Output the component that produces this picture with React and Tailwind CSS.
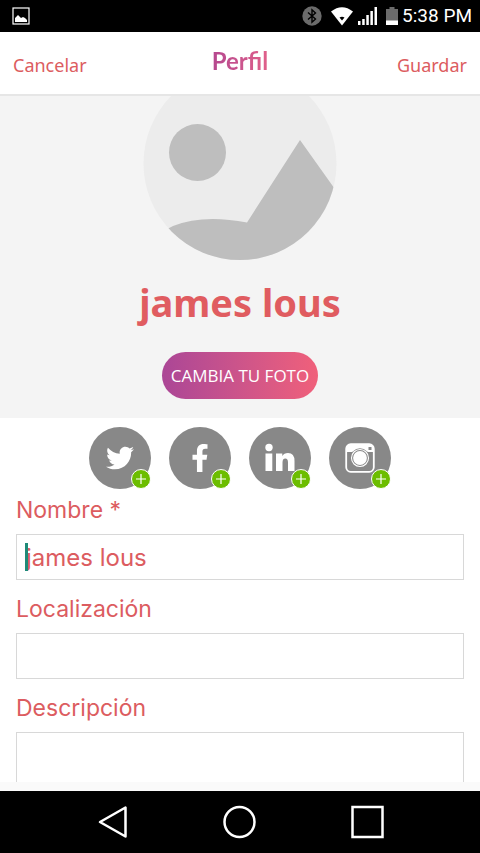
import React from 'react';
import { FaTwitter, FaFacebookF } from 'react-icons/fa';

const LinkedinIcon = ({ className }) => (
  <svg viewBox="0 0 30 30" className={className} fill="currentColor" aria-hidden="true">
    <circle cx="4" cy="4.500" r="3.700" />
    <path d="M.5 10.500H7.300V28H.5zM11 10.500H17.300V13Q19 10 23 10Q29.500 10 29.500 18V28H23V19.500Q23 15.500 20.300 15.500Q17.500 15.500 17.500 19.500V28H11z" />
  </svg>
);

const InstagramIcon = ({ className }) => (
  <svg viewBox="0 0 30 30" className={className} fill="none" aria-hidden="true">
    <rect x="1.200" y="1.200" width="27.600" height="27.600" rx="4.500" stroke="currentColor" strokeWidth="1.800" />
    <path d="M1 9V5.500A4.500 4.500 0 0 1 5.500 1H24.500A4.500 4.500 0 0 1 29 5.500V9Z" fill="currentColor" />
    <rect x="23.500" y="4" width="3" height="3" fill="#888888" />
    <circle cx="15" cy="15" r="9.700" fill="#888888" />
    <circle cx="15" cy="15" r="8.500" stroke="currentColor" strokeWidth="1.100" />
    <circle cx="15" cy="15" r="6.900" fill="currentColor" />
  </svg>
);

const networks = [
  { name: 'Twitter', icon: FaTwitter, size: 'size-7' },
  { name: 'Facebook', icon: FaFacebookF, size: 'size-7' },
  { name: 'LinkedIn', icon: LinkedinIcon, size: 'size-[30px]' },
  { name: 'Instagram', icon: InstagramIcon, size: 'size-[30px]' },
];

const StatusBar = () => (
  <div className="flex h-8 shrink-0 items-center justify-between bg-black pr-2 pl-3 text-white">
    <svg viewBox="0 0 18 18" className="size-[18px]" aria-hidden="true">
      <rect x="1" y="1" width="16" height="16" fill="none" stroke="currentColor" strokeWidth="1.200" />
      <path d="M3 15v-4l3-3 2 2 1 1 2-1 2 1 2 2v2z" fill="currentColor" />
    </svg>
    <div className="flex items-center">
      <svg viewBox="0 0 20 20" className="mr-2 size-5" aria-hidden="true">
        <circle cx="10" cy="10" r="9.700" fill="#6b6b6b" />
        <path d="M6 6.500l7.500 6.500-3.500 3.200V3.800l3.500 3.200-7.500 6.500" fill="none" stroke="#000" strokeWidth="1.400" />
      </svg>
      <svg viewBox="0 0 24 20" className="mr-1 h-5 w-6" aria-hidden="true">
        <path d="M1 5.500Q12-3 23 5.500L12 19.500Z" fill="currentColor" />
        <path d="M9.500 11.500q2.500-1.500 5 0l-2.500 3z" fill="#000" />
      </svg>
      <svg viewBox="0 0 20 20" className="mr-2 size-5" fill="currentColor" aria-hidden="true">
        <path d="M0 15h2.500v4H0zM4.200 13h2.500v6H4.200zM8.300 9h2.500v10H8.300zM12.400 5h2.500v14h-2.500zM16.500 1H19v18h-2.500z" />
      </svg>
      <svg viewBox="0 0 12 20" className="mr-1 h-5 w-3" aria-hidden="true">
        <path d="M3.500 1h5v2H12v12H0V3h3.500z" fill="#6b6b6b" />
        <path d="M0 14.500h12V19H0z" fill="currentColor" />
      </svg>
      <span className="font-['Roboto',sans-serif] text-[19px] leading-6">5:38 PM</span>
    </div>
  </div>
);

const Header = () => (
  <header className="grid h-16 shrink-0 grid-cols-3 items-center border-b-2 border-[#e6e6e6] bg-white px-[13px] font-['Noto_Sans',sans-serif] text-lg text-[#dc5c60]">
    <button type="button" className="justify-self-start pt-1">Cancelar</button>
    <h1 className="justify-self-center bg-linear-to-r from-[#b5488f] to-[#e0608a] bg-clip-text pb-1 font-['Lato',sans-serif] text-2xl leading-10 font-bold text-transparent">
      Perfil
    </h1>
    <button type="button" className="justify-self-end pt-1">Guardar</button>
  </header>
);

const Avatar = () => (
  <svg viewBox="0 0 194 164" className="h-[164px] w-[194px]" role="img" aria-label="Foto de perfil">
    <defs>
      <clipPath id="avatar-clip">
        <circle cx="97" cy="67.500" r="96.500" />
      </clipPath>
    </defs>
    <g clipPath="url(#avatar-clip)">
      <rect y="-30" width="194" height="200" fill="#ececec" />
      <circle cx="54.500" cy="56.500" r="28.500" fill="#bebebe" />
      <path d="M0 145Q26 132 30 130Q60 118 104 126.500L157 44L194 96V170H0Z" fill="#bebebe" />
    </g>
  </svg>
);

const SocialButton = ({ network }) => {
  const Icon = network.icon;
  return (
    <button
      type="button"
      aria-label={`Añadir ${network.name}`}
      className="relative flex size-[62px] items-center justify-center rounded-full bg-[#888888] text-white"
    >
      <Icon className={network.size} />
      <span className="absolute right-0 bottom-0 flex size-5 items-center justify-center rounded-full border border-white bg-[#6cbd00]">
        <svg viewBox="0 0 12 12" className="size-3" stroke="#fff" strokeWidth="1.200" aria-hidden="true">
          <path d="M6 1v10M1 6h10" />
        </svg>
      </span>
    </button>
  );
};

const fieldClass = 'block w-full border border-[#d8d8d8] bg-white px-[9px] text-2xl outline-none';

const ProfileForm = () => (
  <form className="flex flex-col px-4 pt-1 font-['Inter',sans-serif] text-[23px] leading-8 text-[#dc5c60]">
    <label htmlFor="name" className="pt-px pb-2">Nombre *</label>
    <div className="relative mb-[13px]">
      <input id="name" type="text" defaultValue="james lous" className={`${fieldClass} h-[46px]`} />
      <span className="absolute top-[9px] left-[9px] h-7 w-[3px] bg-[#1f8a78]" />
    </div>
    <label htmlFor="location" className="pb-2">Localización</label>
    <input id="location" type="text" className={`${fieldClass} mb-[13px] h-[46px]`} />
    <label htmlFor="description" className="pb-2">Descripción</label>
    <textarea id="description" className={`${fieldClass} h-[50px] resize-none border-b-0`} />
  </form>
);

const NavBar = () => (
  <nav className="flex h-[62px] shrink-0 items-center justify-center gap-[94px] bg-black text-white">
    <button type="button" aria-label="Atrás">
      <svg viewBox="0 0 34 34" className="size-[34px]" fill="none" stroke="currentColor" strokeWidth="2.500" strokeLinejoin="round" aria-hidden="true">
        <path d="M30.500 2.500v29L5 17z" />
      </svg>
    </button>
    <button type="button" aria-label="Inicio">
      <svg viewBox="0 0 34 34" className="size-[34px]" fill="none" stroke="currentColor" strokeWidth="2.500" aria-hidden="true">
        <circle cx="16.500" cy="17" r="15" />
      </svg>
    </button>
    <button type="button" aria-label="Recientes">
      <svg viewBox="0 0 34 34" className="size-[34px]" fill="none" stroke="currentColor" strokeWidth="2.500" aria-hidden="true">
        <path d="M1.500 2h30v30h-30z" />
      </svg>
    </button>
  </nav>
);

const App = () => (
  <div className="flex h-screen flex-col bg-[#fafafa]">
    <StatusBar />
    <Header />
    <main className="min-h-0 flex-1 overflow-hidden">
      <section className="flex flex-col items-center bg-[#f4f4f4] pb-[19px]">
        <Avatar />
        <h2 className="mt-4 font-['Noto_Sans',sans-serif] text-[38px] leading-[52px] font-bold text-[#e05c60]">
          james lous
        </h2>
        <button
          type="button"
          className="mt-6 h-[47px] rounded-full bg-linear-to-r from-[#ab4696] to-[#f0607a] px-[9px] font-['Open_Sans',sans-serif] text-[17px] text-white"
        >
          CAMBIA TU FOTO
        </button>
      </section>
      <div className="bg-white">
        <div className="flex justify-center gap-[18px] pt-[9px]">
          {networks.map((network) => (
            <SocialButton key={network.name} network={network} />
          ))}
        </div>
        <ProfileForm />
      </div>
    </main>
    <NavBar />
  </div>
);

export default App;
